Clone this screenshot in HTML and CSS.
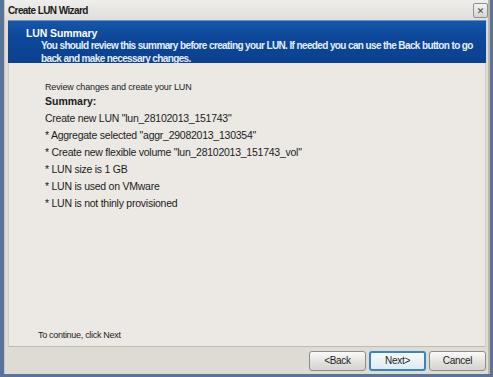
FILE: index.html
```html
<!DOCTYPE html>
<html lang="en">
<head>
  <meta charset="UTF-8" />
  <title>Create LUN Wizard</title>
  <link rel="stylesheet" href="styles.css">
</head>
<body>
  <div class="window">
    <!-- Title bar -->
    <div class="titlebar">
      <div class="title">Create LUN Wizard</div>
      <button class="close">&#x2715;</button>
    </div>

    <div class="frame">
      <!-- Banner -->
      <div class="banner">
        <div class="banner-title">LUN Summary</div>
        <div class="banner-text">You should review this summary before creating your LUN. If needed you can use the Back button to go<br>back and make necessary changes.</div>
      </div>

      <!-- Page content -->
      <div class="panel">
        <div class="intro">Review changes and create your LUN</div>
        <div class="summary-head">Summary:</div>
        <ul class="summary">
          <li>Create new LUN "lun_28102013_151743"</li>
          <li>* Aggregate selected "aggr_29082013_130354"</li>
          <li>* Create new flexible volume "lun_28102013_151743_vol"</li>
          <li>* LUN size is 1 GB</li>
          <li>* LUN is used on VMware</li>
          <li>* LUN is not thinly provisioned</li>
        </ul>
        <div class="hint">To continue, click Next</div>
      </div>

      <!-- Buttons -->
      <div class="actions">
        <button class="btn">&lt;Back</button>
        <button class="btn default">Next&gt;</button>
        <button class="btn">Cancel</button>
      </div>
    </div>
  </div>
</body>
</html>
```

FILE: styles.css
```css
* {
  margin: 0;
  padding: 0;
  box-sizing: border-box;
}

html, body {
  height: 100%;
}

body {
  font-family: 'Liberation Sans', Arial, sans-serif;
  background: #5a7396;
  overflow: hidden;
  padding: 0 3px 3px 4px;
}

.window {
  height: 374px;
  display: flex;
  flex-direction: column;
  background: #dedbd5;
  border-left: 1px solid #c9c6c0;
  border-right: 2px solid #b9b6b0;
}

/* Title bar */
.titlebar {
  height: 20px;
  display: flex;
  align-items: center;
  justify-content: space-between;
  padding: 0 0 0 3px;
  background: linear-gradient(#efeeec, #e1dfdb);
}

.title {
  font-weight: bold;
  font-size: 10px;
  color: #1a1a1a;
  letter-spacing: -0.6px;
}

.close {
  width: 15px;
  height: 15px;
  margin-top: 1px;
  border: 1px solid #8f8f8f;
  border-radius: 2px;
  background: linear-gradient(#f4f4f4, #d4d4d4);
  color: #444;
  font-size: 9px;
  font-weight: bold;
  line-height: 12px;
  text-align: center;
  font-family: 'DejaVu Sans', sans-serif;
}

.frame {
  flex: 1;
  display: flex;
  flex-direction: column;
  padding: 0 2px 0 3px;
}

/* Banner */
.banner {
  height: 43px;
  background: linear-gradient(#1656a8, #0d4799 40%, #0b418f);
  border-top: 1px solid #6f8fc4;
  padding: 6px 4px 0 18px;
  color: #fff;
}

.banner-title {
  font-weight: bold;
  font-size: 10.5px;
  letter-spacing: -0.1px;
  line-height: 12px;
}

.banner-text {
  font-weight: bold;
  font-size: 10px;
  letter-spacing: -0.62px;
  line-height: 13px;
  color: #e6eefb;
  padding-left: 15px;
  white-space: nowrap;
}

/* Content */
.panel {
  flex: 1;
  display: flex;
  flex-direction: column;
  background: #ece9e4;
  border-left: 1px solid #d2cfc9;
  border-right: 1px solid #d2cfc9;
  border-bottom: 1px solid #bdbab4;
  padding: 18px 0 0 36px;
  color: #1b1b1b;
}

.intro {
  font-size: 9px;
  letter-spacing: -0.15px;
  line-height: 12px;
}

.summary-head {
  font-weight: bold;
  font-size: 10.5px;
  line-height: 14px;
  margin-top: 1px;
}

.summary {
  list-style: none;
  font-size: 10.5px;
  letter-spacing: -0.25px;
  margin-top: 2px;
}

.summary li {
  line-height: 17px;
}

.hint {
  margin-top: auto;
  margin-bottom: 6px;
  margin-left: -7px;
  font-size: 9px;
  letter-spacing: -0.3px;
}

/* Buttons */
.actions {
  height: 27px;
  display: flex;
  justify-content: flex-end;
  align-items: center;
  gap: 3px;
}

.btn {
  width: 57px;
  height: 20px;
  border: 1px solid #8e8c88;
  border-radius: 3px;
  background: linear-gradient(#fafafa, #e2e0dc 60%, #d5d3cf);
  font-family: 'Liberation Sans', Arial, sans-serif;
  font-size: 10px;
  letter-spacing: -0.3px;
  color: #222;
}

.btn.default {
  border: 2px solid #3b86b8;
  background: linear-gradient(#f6fbfd, #dfeaf0);
}
```
